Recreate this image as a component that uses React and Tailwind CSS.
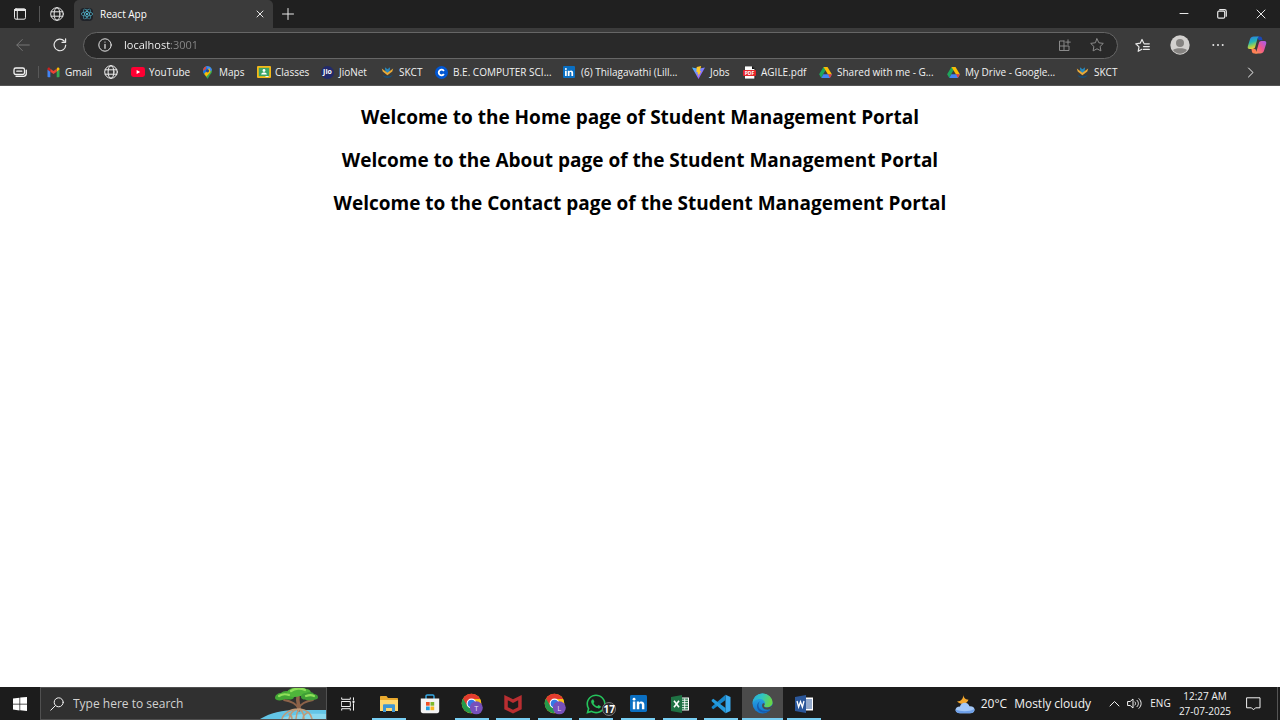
import React from "react";
import { FaReact, FaWhatsapp } from "react-icons/fa";

const line = { fill: "none", stroke: "currentColor", strokeLinecap: "round", strokeLinejoin: "round" };

function Line({ size = "size-4", box = 16, width = 1, children }) {
  return (
    <svg className={`${size} shrink-0`} viewBox={`0 0 ${box} ${box}`} strokeWidth={width} aria-hidden="true" {...line}>
      {children}
    </svg>
  );
}

function Globe() {
  return (
    <Line size="size-[14px]" box={14}>
      <circle cx="7" cy="7" r="6.3" />
      <ellipse cx="7" cy="7" rx="2.9" ry="6.3" />
      <path d="M1.2 4.8h11.6M1.2 9.2h11.6" />
    </Line>
  );
}

function Gmail() {
  return (
    <svg className="size-[13px]" viewBox="0 0 13 13" aria-hidden="true">
      <path d="M.5 3.4v7.1c0 .4.3.7.7.7h2.1V5.6z" fill="#4285f4" />
      <path d="M12.5 3.4v7.1c0 .4-.3.7-.7.7H9.7V5.6z" fill="#34a853" />
      <path d="M9.7 2.7v3l2.8-2.1v-.7c0-1.2-1.3-1.8-2.2-1.1z" fill="#fbbc04" />
      <path d="M3.3 5.7v-3L6.5 5l3.2-2.3v3L6.5 8z" fill="#ea4335" />
      <path d="M.5 2.9v.7l2.8 2.1v-3l-.6-.9C1.8 1.1.5 1.7.5 2.9z" fill="#c5221f" />
    </svg>
  );
}

function YouTube() {
  return (
    <svg className="h-[10px] w-[14px]" viewBox="0 0 14 10" aria-hidden="true">
      <rect width="14" height="10" rx="2.4" fill="#ff0033" />
      <path d="M5.6 2.9v4.2L9.2 5z" fill="#fff" />
    </svg>
  );
}

function MapsPin() {
  return (
    <svg className="size-[13px]" viewBox="0 0 13 13" aria-hidden="true">
      <clipPath id="pin">
        <path d="M6.500.300a4.500 4.500 0 0 0-4.500 4.500c0 2.200 1.300 3.300 2.600 5 .8 1 1.200 2.900 1.900 2.900s1.100-1.900 1.900-2.900c1.300-1.700 2.600-2.800 2.600-5A4.500 4.500 0 0 0 6.500.300z" />
      </clipPath>
      <g clipPath="url(#pin)">
        <path d="M0 0h13v13H0z" fill="#34a853" />
        <path d="M0 0h6.500v4.800L2.500 9.500 0 8z" fill="#1a73e8" />
        <path d="M0 0h5.500L4.800 2.900 2 5 0 2z" fill="#ea4335" />
        <path d="M5 0h8v3L8.500 5.800 6.500 3z" fill="#4285f4" />
        <path d="M2.500 8.700 8.300 2l1.300 4L4 12z" fill="#fbbc04" />
      </g>
      <circle cx="6.500" cy="4.800" r="1.600" fill="#29468a" />
    </svg>
  );
}

function Classroom() {
  return (
    <svg className="h-3 w-[14px]" viewBox="0 0 14 12" aria-hidden="true">
      <rect width="14" height="12" rx="1" fill="#f4b919" />
      <rect x="1.800" y="1.800" width="10.400" height="8.400" fill="#3ba567" />
      <circle cx="7" cy="4.500" r="1.400" fill="#fff" />
      <path d="M4.200 8.600c0-1.600 1.500-2.100 2.800-2.100s2.800.5 2.800 2.100z" fill="#fff" />
      <path d="M8.500 10h3v1h-3z" fill="#f1f1f1" />
    </svg>
  );
}

function Jio() {
  return (
    <span className="flex size-[13px] items-center justify-center rounded-full bg-[#222a6b] text-[7px] font-bold text-white">Jio</span>
  );
}

function Skct() {
  return (
    <svg className="size-[13px]" viewBox="0 0 13 13" aria-hidden="true">
      <path d="M3.900 1.200 6.500 3.200l2.600-2-.5 4.200-2.100 2-2.100-2z" fill="#2889bd" />
      <path d="M.8 2.400 6.400 6.800l5.800-4.400-.9 3.200-4.900 3.700-4.700-3.700z" fill="#e9aa38" />
      <path d="M1.500 9c2.700 1.700 7.300 1.700 10 0-1.100 4-8.900 4-10 0z" fill="#174e78" />
    </svg>
  );
}

function Coursera() {
  return (
    <svg className="size-[13px]" viewBox="0 0 13 13" aria-hidden="true">
      <circle cx="6.500" cy="6.500" r="6.500" fill="#0056d2" />
      <path d="M8.900 8a2.800 2.800 0 1 1 0-3" fill="none" stroke="#fff" strokeWidth="1.800" />
    </svg>
  );
}

function LinkedIn({ size }) {
  return (
    <svg className={size} viewBox="0 0 18 18" aria-hidden="true">
      <rect width="18" height="18" rx="1.500" fill="#0a6fc2" />
      <circle cx="4.300" cy="4.400" r="1.500" fill="#fff" />
      <path d="M3 7h2.600v8H3zM7.200 7h2.500v1.100c1.100-2 5.500-1.900 5.500 2V15h-2.600v-4.500c0-2-2.800-1.900-2.800 0V15H7.200z" fill="#fff" />
    </svg>
  );
}

function Vite() {
  return (
    <svg className="size-[13px]" viewBox="0 0 13 13" aria-hidden="true">
      <defs>
        <linearGradient id="vite" x2="1" y2="1">
          <stop stopColor="#41c5ff" />
          <stop offset="1" stopColor="#bd34fe" />
        </linearGradient>
      </defs>
      <path d="M0 1.500 6.500 13 13 1.500 6.500 2.800z" fill="url(#vite)" />
      <path d="m9.200 0-4.500.9-.3 5.300 1.500-.3-.5 2.200 1.200-.3L5.900 11l3.300-6-1.500.2z" fill="#ffc928" />
    </svg>
  );
}

function Pdf() {
  return (
    <svg className="size-[13px]" viewBox="0 0 13 13" aria-hidden="true">
      <path d="M1.500 0h7.700l2.600 2.700V13H1.500z" fill="#fff" stroke="#111" strokeWidth=".7" />
      <path d="M9 0v3h3" fill="#111" />
      <rect y="4" width="13" height="6" rx=".8" fill="#e5252a" />
      <text x="6.500" y="8.800" textAnchor="middle" fontSize="5" fontWeight="700" fill="#fff">PDF</text>
    </svg>
  );
}

function Drive() {
  return (
    <svg className="size-[13px]" viewBox="0 0 13 13" aria-hidden="true">
      <path d="M4.500 1h4l-4.200 7L2.300 12 .1 8.300z" fill="#1ea55b" />
      <path d="M4.500 1h4L13 8.500H9z" fill="#fbbc04" />
      <path d="M2.300 12l2-3.700H13L10.800 12z" fill="#4285f4" />
      <path d="M9 8.300h4L10.900 12z" fill="#ea4335" />
    </svg>
  );
}

const bookmarks = [
  { label: "Gmail", icon: <Gmail />, width: "w-[57px]" },
  { label: "", name: "New site", icon: <Globe />, width: "w-[27px]" },
  { label: "YouTube", icon: <YouTube />, width: "w-[70px]" },
  { label: "Maps", icon: <MapsPin />, width: "w-[56px]" },
  { label: "Classes", icon: <Classroom />, width: "w-[64px]" },
  { label: "JioNet", icon: <Jio />, width: "w-[60px]" },
  { label: "SKCT", icon: <Skct />, width: "w-[54px]" },
  { label: "B.E. COMPUTER SCI...", icon: <Coursera />, width: "w-[128px]" },
  { label: "(6) Thilagavathi (Lill...", icon: <LinkedIn size="size-3" />, width: "w-[129px]" },
  { label: "Jobs", icon: <Vite />, width: "w-[51px]" },
  { label: "AGILE.pdf", icon: <Pdf />, width: "w-[76px]" },
  { label: "Shared with me - G...", icon: <Drive />, width: "w-[128px]" },
  { label: "My Drive - Google...", icon: <Drive />, width: "w-[129px]" },
  { label: "SKCT", icon: <Skct />, width: "w-[54px]" },
];

function IconButton({ label, className = "", children }) {
  return (
    <button type="button" aria-label={label} className={`flex shrink-0 items-center justify-center ${className}`}>
      {children}
    </button>
  );
}

function TabStrip() {
  return (
    <div className="flex h-7 items-stretch bg-[#202020] text-[#e8e8e8]">
      <IconButton label="Tab actions" className="w-[39px]">
        <Line size="size-3" box={12}>
          <rect x=".5" y=".8" width="11" height="10.400" rx="1.500" />
          <path d="M.7 2h10.600" strokeWidth="2" />
          <path d="M3.300 3v8" />
        </Line>
      </IconButton>
      <span className="my-[6px] w-px bg-[#555]" />
      <IconButton label="Pinned tab" className="w-[34px]"><Globe /></IconButton>
      <div className="flex w-[199px] items-center rounded-t-[5px] bg-[#3b3b3b] pr-2 pl-[6px]">
        <span className="flex size-[13px] items-center justify-center rounded-sm bg-[#202329] text-[#58c4dc]">
          <FaReact className="size-3" />
        </span>
        <span className="ml-[7px] flex-1 text-[10px] text-white">React App</span>
        <IconButton label="Close tab" className="size-[10px]">
          <Line size="size-2" box={8}><path d="m1 1 6 6M7 1 1 7" /></Line>
        </IconButton>
      </div>
      <IconButton label="New tab" className="w-[30px]">
        <Line size="size-3" box={12}><path d="M6 .5v11M.5 6h11" /></Line>
      </IconButton>
      <div className="ml-auto flex">
        <IconButton label="Minimize" className="w-[38px]">
          <Line size="size-[10px]" box={10}><path d="M1 4.500h8" /></Line>
        </IconButton>
        <IconButton label="Restore" className="w-[38px]">
          <Line size="size-[10px]" box={10} width={1.2}>
            <rect x=".7" y="2.200" width="7" height="7" rx="1.200" />
            <path d="M2.700.7h4.800c1.200 0 1.800.7 1.800 1.800v4.700" />
          </Line>
        </IconButton>
        <IconButton label="Close window" className="w-[39px]">
          <Line size="size-[10px]" box={10}><path d="m1 1 8 8M9 1 1 9" /></Line>
        </IconButton>
      </div>
    </div>
  );
}

function Copilot() {
  return (
    <svg className="size-5" viewBox="0 0 20 20" aria-hidden="true">
      <defs>
        <linearGradient id="cpA" x1="0" y1="0" x2=".3" y2="1">
          <stop stopColor="#2a78ea" />
          <stop offset=".5" stopColor="#24b5b5" />
          <stop offset=".8" stopColor="#9ed04f" />
          <stop offset="1" stopColor="#f3c93a" />
        </linearGradient>
        <linearGradient id="cpB" x1="1" y1="0" x2="0" y2="1">
          <stop stopColor="#a35cf1" />
          <stop offset=".5" stopColor="#f0568e" />
          <stop offset="1" stopColor="#ff9b48" />
        </linearGradient>
      </defs>
      <path d="M9.500 1.500h3.400c1.400 0 1.900.9 2.200 2l.5 1.700h-3.700z" fill="#1b48b8" />
      <path d="M6.800 1.500h5.400c-1 .4-1.500 1.200-1.800 2.400L8.300 11.500C7.800 13.300 7 14 5.400 14H2.700C.7 14 .4 12.500.9 10.900L3 4.200C3.600 2.400 4.800 1.500 6.800 1.500z" fill="url(#cpA)" />
      <path d="M10.500 18.500H7.100c-1.400 0-1.900-.9-2.200-2L4.400 14h3.900z" fill="#ff7f55" />
      <path d="M13.200 18.500H7.800c1-.4 1.500-1.200 1.800-2.400l2.100-7.600C12.200 6.700 13 6 14.600 6h2.700c2 0 2.300 1.500 1.800 3.100L17 15.800c-.6 1.800-1.800 2.700-3.800 2.700z" fill="url(#cpB)" />
    </svg>
  );
}

function Toolbar() {
  return (
    <div className="flex h-[34px] items-center bg-[#3b3b3b] text-[#e8e8e8]">
      <IconButton label="Back" className="ml-[5px] w-[36px] text-[#777]">
        <Line size="size-[14px]" box={14}><path d="M13.300 7H1M6.300 1.500.8 7l5.500 5.500" /></Line>
      </IconButton>
      <IconButton label="Refresh" className="w-[38px]">
        <Line size="size-[14px]" box={14} width={1.2}>
          <path d="M12.700 7.200A5.800 5.800 0 1 1 11.200 3M12.600.8v3.500H9" />
        </Line>
      </IconButton>
      <label className="ml-1 flex h-[27px] flex-1 items-center rounded-full border border-[#666] bg-[#292929] pr-[13px] pl-[14px]">
        <Line size="size-[14px]" box={14}>
          <circle cx="7" cy="7" r="6.200" />
          <path d="M7 6.300v4M7 4v.1" strokeWidth="1.200" />
        </Line>
        <input
          aria-label="Address"
          defaultValue="localhost:3001"
          className="ml-3 min-w-0 flex-1 bg-[linear-gradient(90deg,#ffffff_47px,#8a8a8a_47px)] bg-clip-text text-[11px] text-transparent outline-none"
        />
        <IconButton label="Install app" className="w-[34px] text-[#8a8a8a]">
          <Line size="size-[13px]" box={13}>
            <path d="M6 2H1.500v9.500H11V7H1.500M6 2v9.500M10 .8v4.600M7.700 3.100h4.600" />
          </Line>
        </IconButton>
        <IconButton label="Add to favorites" className="ml-[9px] w-[14px] text-[#8a8a8a]">
          <Line size="size-[14px]" box={14}>
            <path d="m7 .8 1.900 4 4.400.6-3.200 3.100.8 4.400L7 10.800l-3.900 2.100.8-4.400L.7 5.400l4.400-.6z" />
          </Line>
        </IconButton>
      </label>
      <div className="flex pl-[5px]">
        <IconButton label="Favorites" className="w-[38px]">
          <Line size="size-[15px]" box={15} width={1.2}>
            <path d="M8.700 5 7 1.500 5.200 5.200l-4.400.6L4 8.900l-.8 4.400 3.700-2M9.300 5.800h5M8.500 8.600h5.800M8.500 11.400h5.800" />
          </Line>
        </IconButton>
        <IconButton label="Profile" className="w-[38px]">
          <svg className="size-5" viewBox="0 0 20 20" aria-hidden="true">
            <circle cx="10" cy="10" r="9.700" fill="#d2d0ce" />
            <circle cx="10" cy="8" r="4" fill="#858381" />
            <path d="M3 15c2-2.500 12-2.500 14 0-3.500 5-10.500 5-14 0z" fill="#858381" />
          </svg>
        </IconButton>
        <IconButton label="Settings and more" className="w-[38px]">
          <svg className="h-1 w-3" viewBox="0 0 12 4" fill="currentColor" aria-hidden="true">
            <circle cx="1.300" cy="2" r="1" /><circle cx="6" cy="2" r="1" /><circle cx="10.700" cy="2" r="1" />
          </svg>
        </IconButton>
        <IconButton label="Copilot" className="w-[43px] pr-1"><Copilot /></IconButton>
      </div>
    </div>
  );
}

function BookmarksBar() {
  return (
    <nav aria-label="Favorites bar" className="flex h-6 items-center border-b border-[#555] bg-[#3b3b3b] pb-[3px] text-[10px] text-[#f2f2f2]">
      <IconButton label="Workspaces" className="w-[38px] pl-[2px]">
        <Line size="size-[14px]" box={14} width={1.3}>
          <rect x="1" y="3" width="10.500" height="6.500" rx="1.800" />
          <path d="M3.800 6.200h5M3 11.300h7.500c1.900 0 2.800-1 2.800-2.800V5.200" />
        </Line>
      </IconButton>
      <span className="mr-2 h-3 w-px bg-[#585858]" />
      {bookmarks.map((b, i) => (
        <a key={i} href="#" aria-label={b.name} className={`flex shrink-0 items-center gap-1 whitespace-nowrap ${b.width}`}>
          <span className="flex w-[14px] shrink-0">{b.icon}</span>
          {b.label}
        </a>
      ))}
      <IconButton label="More favorites" className="mr-[24px] ml-auto">
        <Line size="size-[11px]" box={11}><path d="m3.500 1 4.500 4.500L3.500 10" /></Line>
      </IconButton>
    </nav>
  );
}

function Mangrove() {
  return (
    <svg className="h-8 w-[66px] shrink-0 self-end" viewBox="0 0 66 32" aria-hidden="true">
      <path d="M0 32c10-6 22-9 38-9h28v9z" fill="#63c5e6" />
      <path d="M20 32c8-4 22-6 46-5v5z" fill="#8ad8ee" />
      <g fill="none" stroke="#8d6249" strokeLinecap="round">
        <path d="M24 13c6 1 12 3 14 8M53 13c-6 1-12 3-14 8" strokeWidth="1.800" />
        <path d="M38 10c-1 5 1 6 1 13" strokeWidth="3.600" />
        <path d="M38 22c-8 0-15 5-16 10M38 22c-5 1-8 5-9 10M39 22c-2 3-3 6-3 10M39 22c4 2 5 6 5 10M40 22c7 1 11 5 12 10M29 27c2 1 3 3 3 5M47 26c-2 1-4 3-4 6" stroke="#c09a78" strokeWidth="1.500" />
      </g>
      <path d="M15 11c0-3 3-5 6-5 2-2 7-3 9 0 3 0 4 2 4 4 0 3-6 3-9 2-3 2-10 2-10-1z" fill="#42a635" />
      <path d="M27 6c0-3 4-5 7-5 4-2 10-1 12 1 4 0 6 3 4 5-3 3-8 2-10 2-5 2-13 1-13-3z" fill="#4fb53b" />
      <path d="M41 10c0-3 3-4 5-4 3-2 7-1 8 1 4 0 5 4 3 5-4 2-16 2-16-2z" fill="#3f9f36" />
      <path d="M31 4c4-3 10-3 14-1M19 9c3-2 7-2 10-1M46 9c3-1 6-1 8 0" fill="none" stroke="#8fe05a" strokeWidth="2.200" strokeLinecap="round" />
    </svg>
  );
}

function Chrome({ letter }) {
  return (
    <svg className="size-[22px]" viewBox="0 0 22 22" aria-hidden="true">
      <circle cx="10.500" cy="10.500" r="9.800" fill="#fbc116" />
      <path d="m10.500 10.500-8.500-4.900a9.800 9.800 0 0 0 8 14.700l4.500-7.500z" fill="#249a4b" />
      <path d="M2 5.600a9.800 9.800 0 0 1 17.200.4h-8.700l-4.300 7z" fill="#e33b2e" />
      <circle cx="10.500" cy="10.500" r="4.900" fill="#fff" />
      <circle cx="10.500" cy="10.500" r="3.800" fill="#3478e5" />
      <circle cx="15.300" cy="14.800" r="6.500" fill="#7650bb" />
      <text x="15.300" y="17.500" textAnchor="middle" fontSize="7.500" fill="#e8defa">{letter}</text>
    </svg>
  );
}

const taskIcons = {
  explorer: (
    <svg className="size-5" viewBox="0 0 20 20" aria-hidden="true">
      <path d="M1 3c0-.6.4-1 1-1h5.500l1.500 2H18c.6 0 1 .4 1 1v12H1z" fill="#e9a92e" />
      <path d="M1 6h18v11H1z" fill="#ffd870" />
      <path d="M4 18v-6.500c0-.8.500-1.200 1.200-1.200h9.600c.7 0 1.200.4 1.200 1.200V18h-3v-4H7v4z" fill="#3f96d3" />
    </svg>
  ),
  store: (
    <svg className="size-5" viewBox="0 0 20 20" aria-hidden="true">
      <path d="M6 6V2.200C6 1.500 6.500 1 7.200 1h5.600c.7 0 1.200.5 1.200 1.200V6" fill="none" stroke="#35a9e5" strokeWidth="1.400" />
      <path d="M.8 4.500h18.400V17c0 1.400-.8 2.200-2.200 2.200H3C1.600 19.200.8 18.400.8 17z" fill="#f3f3f3" />
      <path d="M6 8h3.700v3.700H6z" fill="#ef5025" /><path d="M10.500 8h3.700v3.700h-3.700z" fill="#7db82b" />
      <path d="M6 12.500h3.700v3.700H6z" fill="#209ee0" /><path d="M10.500 12.500h3.700v3.700h-3.700z" fill="#f8b51e" />
    </svg>
  ),
  mcafee: (
    <svg className="size-5" viewBox="0 0 20 20" aria-hidden="true">
      <path d="M1.300 1 10 5.300 18.700 1v14.200L10 19.500l-8.700-4.300zM4.800 6.200v7L10 15.800l5.200-2.600v-7L10 9z" fill="#b92e31" fillRule="evenodd" />
    </svg>
  ),
  excel: (
    <svg className="size-[18px]" viewBox="0 0 18 18" aria-hidden="true">
      <path d="M9 2.500h9v13H9z" fill="#fff" /><path d="M10 3.500h7v11h-7z" fill="#217346" />
      <path d="M10 5.200h7M10 7.700h7M10 10.200h7M10 12.700h7M13.700 3.500v11" stroke="#fff" strokeWidth=".9" />
      <path d="m0 2 11-2v18L0 16z" fill="#1f7244" />
      <path d="m3 5.700 5 6.600M8 5.700l-5 6.600" stroke="#fff" strokeWidth="1.600" />
    </svg>
  ),
  code: (
    <svg className="size-5" viewBox="0 0 20 20" aria-hidden="true">
      <path d="M14.500.8 19.500 3v14l-5 2.200z" fill="#39a9ee" />
      <path d="M14.500.8.700 12.800v1.300l1.600 1.200 12.200-9.400z" fill="#1686ca" />
      <path d="M14.500 19.200.700 7.200V5.900l1.600-1.200 12.200 9.400z" fill="#259bdd" />
    </svg>
  ),
  edge: (
    <svg className="size-[21px]" viewBox="0 0 21 21" aria-hidden="true">
      <defs>
        <linearGradient id="edgeTop" x2="1" y2=".3">
          <stop stopColor="#25a8df" /><stop offset=".5" stopColor="#31c6c0" /><stop offset="1" stopColor="#67d64b" />
        </linearGradient>
        <linearGradient id="edgeLow" x2="0" y2="1">
          <stop stopColor="#2fb2ea" /><stop offset="1" stopColor="#1272cd" />
        </linearGradient>
      </defs>
      <circle cx="10.500" cy="10.500" r="10" fill="url(#edgeLow)" />
      <path d="M.5 10.500C1 4 5.500.5 10.500.5c6 0 10 4.500 10 8.800 0 3.300-2.600 5-5.300 5-2 0-3.300-.7-3.300-1.400s1-1 1-2.700C12.900 7.800 10.700 6 7.800 6 4 6 1 8.200.5 10.500z" fill="url(#edgeTop)" />
      <path d="M8.500 8c-2.600 1.900-2.700 5.700-.5 8 2.300 2.300 6.300 2.800 10.400.8-3 3.600-8.800 3.700-11.700.7C4 14.600 4.500 10 8.500 8z" fill="#175bad" />
      <path d="M11.900 12.900c0 .9 1.500 1.500 3.300 1.500 2.200 0 3.800-.8 4.700-2.200.5 1.500-.2 2.900-1.500 4-3.300 1-6.500.2-7.800-1.800-1-1.800-.5-3.700.8-4.200 1.300-.3 1.800.9.500 2.700z" fill="#4b4b4b" />
    </svg>
  ),
  word: (
    <svg className="size-[18px]" viewBox="0 0 18 18" aria-hidden="true">
      <path d="M9 2.500h9v13H9z" fill="#fff" />
      <path d="M11 5h6M11 7h6M11 9h6M11 11h6M11 13h6" stroke="#2b579a" />
      <path d="m0 2 11-2v18L0 16z" fill="#2b579a" />
      <path d="m2 6 1.600 6L5.500 6.700 7.400 12 9 6" fill="none" stroke="#fff" strokeWidth="1.300" />
    </svg>
  ),
};

const tasks = [
  { name: "File Explorer", icon: taskIcons.explorer, open: true },
  { name: "Microsoft Store", icon: taskIcons.store },
  { name: "Chrome profile T", icon: <Chrome letter="T" />, open: true },
  { name: "McAfee", icon: taskIcons.mcafee, open: true },
  { name: "Chrome profile L", icon: <Chrome letter="L" />, open: true },
  { name: "WhatsApp", icon: <FaWhatsapp className="size-[22px] text-[#25c45c]" />, open: true, badge: "17" },
  { name: "LinkedIn", icon: <LinkedIn size="size-[17px]" />, open: true },
  { name: "Excel", icon: taskIcons.excel, open: true },
  { name: "Visual Studio Code", icon: taskIcons.code, open: true },
  { name: "Microsoft Edge", icon: taskIcons.edge, open: true, active: true },
  { name: "Word", icon: taskIcons.word, open: true },
];

function Taskbar() {
  return (
    <footer className="flex h-[33px] items-stretch bg-[#1c1c1c] text-[#f2f2f2]">
      <IconButton label="Start" className="w-10">
        <svg className="size-[14px]" viewBox="0 0 14 14" fill="#fff" aria-hidden="true">
          <path d="M0 1.500 6.500.700v6H0zM7.200.600 14 0v6.700H7.200zM0 7.400h6.500v6L0 12.600zM7.200 7.400H14V14l-6.800-.7z" />
        </svg>
      </IconButton>
      <label className="flex w-[287px] items-center overflow-hidden border border-[#505050] bg-[#303030] pl-[9px]">
        <Line size="size-[14px]" box={14}><circle cx="8.700" cy="5.300" r="4.500" /><path d="M5.400 8.600.8 13.200" /></Line>
        <input aria-label="Search" placeholder="Type here to search" className="ml-[9px] w-0 min-w-0 flex-1 text-[12px] outline-none placeholder:text-[#d2d2d2]" />
        <Mangrove />
      </label>
      <IconButton label="Task View" className="w-[41px]">
        <Line size="size-[14px]" box={14}>
          <path d="M.7.800v1.500h8.600V.800M.7 13.200v-1.500h8.600v1.500M.7 4.500h8.600v5H.7zM12.500.800v2M12.500 7v6.200" />
          <path d="M12.500 4.300v1.200" strokeWidth="1.800" />
        </Line>
      </IconButton>
      <div className="grid w-[457px] shrink-0 grid-cols-11">
        {tasks.map((t) => (
          <button
            key={t.name}
            type="button"
            aria-label={t.name}
            className={`relative flex items-center justify-center ${t.active ? "bg-[#4b4b4b]" : ""}`}
          >
            {t.icon}
            {t.badge && (
              <span className="absolute right-px bottom-1 flex size-[14px] items-center justify-center rounded-full border border-[#777] bg-[#2b2b2b] text-[10px] font-bold text-white">
                {t.badge}
              </span>
            )}
            {t.open && <span className={`absolute bottom-0 h-[2px] bg-[#78cff4] ${t.active ? "w-full" : "w-[34px]"}`} />}
          </button>
        ))}
      </div>
      <div className="ml-auto flex items-center">
        <button type="button" className="flex items-center text-[12px] whitespace-nowrap">
          <svg className="mr-[6px] size-5" viewBox="0 0 20 20" aria-hidden="true">
            <path d="M8.500 0c-.3 3.500 1.500 5.500 5 5.800-1 3.700-7 6.200-11.500 1.700C6.500 7.500 8.500 4 8.500 0z" fill="#f4a72c" />
            <path d="M5 19.200c-6 0-6-6.600 0-6.700 1-4.800 8-4.800 9.500-.3 6.500-.5 7 7 .5 7z" fill="#a4c8f7" />
            <path d="M5 19.200c-3 0-4.500-1.800-4.400-3.700 5 2.300 14 2.300 18.700-.5.3 2.500-1.500 4.200-4.300 4.200z" fill="#6d9fe8" />
          </svg>
          <span>20°C</span>
          <span className="ml-[7px]">Mostly cloudy</span>
        </button>
        <IconButton label="Show hidden icons" className="ml-[18px] w-[11px]">
          <Line size="size-[11px]" box={11}><path d="M1 8 5.500 3.500 10 8" /></Line>
        </IconButton>
        <IconButton label="Volume" className="ml-[7px]">
          <Line size="size-[15px]" box={15}>
            <path d="M1 5.500h2.200L6 3v9L3.200 9.500H1zM8 6c.8.900.8 2.100 0 3M10 4.300c1.900 1.900 1.900 4.500 0 6.400M12 2.700c2.900 2.900 2.900 6.700 0 9.600" />
          </Line>
        </IconButton>
        <button type="button" className="ml-2 w-[21px] text-[10px]">ENG</button>
        <button type="button" className="ml-[7px] w-[54px] text-center text-[10px] leading-[15px] whitespace-nowrap">
          <span className="block">12:27 AM</span>
          <span className="block">27-07-2025</span>
        </button>
        <IconButton label="Notifications" className="ml-[14px]">
          <Line size="size-[15px]" box={15}><path d="M1 1.800h13v10H9.500l-2 2-2-2H1z" /></Line>
        </IconButton>
        <span className="ml-[16px] h-full w-px bg-[#555]" />
        <span className="w-[2px]" />
      </div>
    </footer>
  );
}

export default function App() {
  return (
    <div className="flex min-h-screen flex-col bg-white font-['Open_Sans','Noto_Sans',sans-serif]">
      <header>
        <TabStrip />
        <Toolbar />
        <BookmarksBar />
      </header>
      <main className="flex flex-1 flex-col gap-4 pt-[18px] text-center text-[19px] leading-[27px] font-bold text-black">
        <h2>Welcome to the Home page of Student Management Portal</h2>
        <h2>Welcome to the About page of the Student Management Portal</h2>
        <h2>Welcome to the Contact page of the Student Management Portal</h2>
      </main>
      <Taskbar />
    </div>
  );
}
